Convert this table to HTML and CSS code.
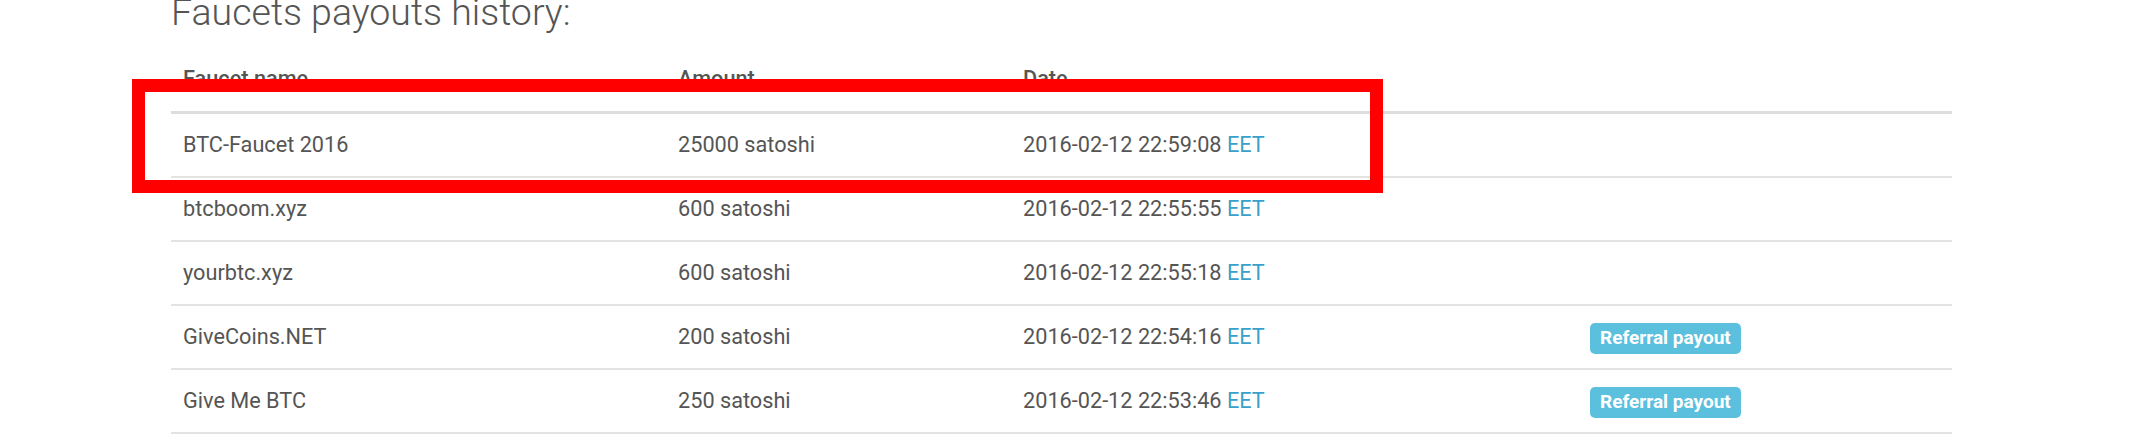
FILE: index.html
```html
<!DOCTYPE html>
<html lang="en">
<head>
    <meta charset="UTF-8">
    <meta name="viewport" content="width=device-width, initial-scale=1.0">
    <title>Faucets payouts history</title>
    <link rel="stylesheet" href="styles.css">
</head>
<body>
<div class="page">
    <h2 class="title">Faucets payouts history:</h2>

    <table class="payouts">
        <colgroup>
            <col class="col-name">
            <col class="col-amount">
            <col class="col-date">
            <col class="col-type">
        </colgroup>
        <thead>
            <tr>
                <th>Faucet name</th>
                <th>Amount</th>
                <th>Date</th>
                <th></th>
            </tr>
        </thead>
        <tbody>
            <tr>
                <td>BTC-Faucet 2016</td>
                <td>25000 satoshi</td>
                <td>2016-02-12 22:59:08 <span class="tz">EET</span></td>
                <td></td>
            </tr>
            <tr>
                <td>btcboom.xyz</td>
                <td>600 satoshi</td>
                <td>2016-02-12 22:55:55 <span class="tz">EET</span></td>
                <td></td>
            </tr>
            <tr>
                <td>yourbtc.xyz</td>
                <td>600 satoshi</td>
                <td>2016-02-12 22:55:18 <span class="tz">EET</span></td>
                <td></td>
            </tr>
            <tr>
                <td>GiveCoins.NET</td>
                <td>200 satoshi</td>
                <td>2016-02-12 22:54:16 <span class="tz">EET</span></td>
                <td><span class="label">Referral payout</span></td>
            </tr>
            <tr>
                <td>Give Me BTC</td>
                <td>250 satoshi</td>
                <td>2016-02-12 22:53:46 <span class="tz">EET</span></td>
                <td><span class="label">Referral payout</span></td>
            </tr>
        </tbody>
    </table>

    <div class="highlight"></div>
</div>
</body>
</html>
```

FILE: styles.css
```css
body {
    margin: 0;
    background: #fff;
    font-family: Roboto, "Liberation Sans", sans-serif;
    color: #555;
}
.page {
    display: flow-root;
    position: relative;
    padding-left: 171px;
}
.title {
    margin: -6px 0 19px;
    font-size: 37.5px;
    line-height: 36px;
    font-weight: 300;
    color: #555;
}
.payouts {
    width: 1781px;
    table-layout: fixed;
    border-collapse: separate;
    border-spacing: 0;
    font-size: 21.7px;
    line-height: 22px;
}
.col-name { width: 495px; }
.col-amount { width: 345px; }
.col-date { width: 567px; }
.col-type { width: 374px; }
.payouts th {
    text-align: left;
    font-weight: 500;
    padding: 19px 12px 21px;
    border-bottom: 3px solid #ddd;
}
.payouts td {
    padding: 20px 12px;
    border-bottom: 2px solid #e3e3e3;
    white-space: nowrap;
}
.tz {
    color: #3a9fca;
}
.label {
    display: inline-block;
    vertical-align: middle;
    margin: -7px 0;
    padding: 5px 10px 7px;
    font-size: 19px;
    line-height: 19px;
    font-weight: 700;
    color: #fff;
    background-color: #5bc0de;
    border-radius: 5px;
}
.highlight {
    position: absolute;
    left: 132px;
    top: 79px;
    width: 1225px;
    height: 88px;
    border: 13px solid #ff0000;
}
```
